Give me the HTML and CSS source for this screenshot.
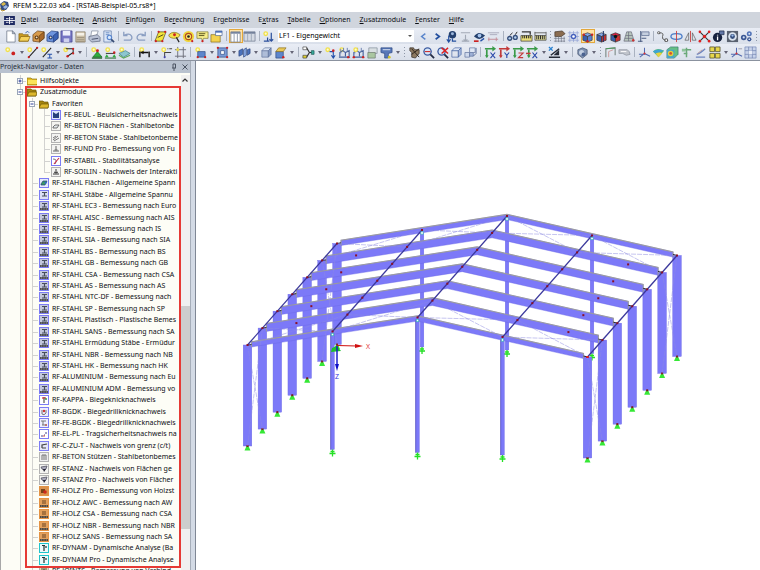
FILE: index.html
```html
<!DOCTYPE html>
<html lang="de">
<head>
  <meta charset="UTF-8">
  <meta name="viewport" content="width=device-width, initial-scale=1.0">
  <title>RFEM 5.22.03 x64 - [RSTAB-Beispiel-05.rs8*]</title>
  <link rel="stylesheet" href="styles.css">
</head>
<body>
  <header class="titlebar">
    <svg class="app-logo" viewBox="0 0 10 12"><path d="M0 4 4 1 8 2 9 6 6 10 1 10Z" fill="#354f82"/><path d="M1 4 4 2 6 4 3 6Z" fill="#d9b94a"/><path d="M3 7 6 5 8 7 5 9Z" fill="#9db8e4"/><path d="M0 8 2 11 5 10" stroke="#b89130" fill="none"/></svg>
    <span>RFEM 5.22.03 x64 - [RSTAB-Beispiel-05.rs8*]</span>
  </header>

  <nav class="menubar">
    <svg class="doc-logo" viewBox="0 0 12 10"><path d="M0 0H12V10H0Z" fill="#1e2a62"/><path d="M0 5H12M6 1V9M2 3H5M7 3H10M2 7H5M7 7H10" stroke="#fff"/></svg>
    <button><u>D</u>atei</button>
    <button>Bearbeite<u>n</u></button>
    <button><u>A</u>nsicht</button>
    <button><u>E</u>infügen</button>
    <button>Be<u>r</u>echnung</button>
    <button>Er<u>g</u>ebnisse</button>
    <button>E<u>x</u>tras</button>
    <button><u>T</u>abelle</button>
    <button><u>O</u>ptionen</button>
    <button><u>Z</u>usatzmodule</button>
    <button><u>F</u>enster</button>
    <button><u>H</u>ilfe</button>
  </nav>

  <div class="toolbar" id="bar-main">
    <div class="tools" data-tools="new open block blockBlue save calc print preview | undo redo | plane lasso target note folderOut | *table tableGrey | newLoad"></div>
    <label class="combo"><select aria-label="Lastfall"><option>LF1 - Eigengewicht</option></select></label>
    <div class="tools" data-tools="prev next eyeLoad valueGrey eye values | glasses ruler rulerB : hand gridDots *viewBox axesBlue axesRed gridCone flag | link rotate mirror cross info cylinder gears :"></div>
  </div>
  <div class="toolbar toolbar-wide">
    <div class="tools" data-tools="node v line lineI v arc v | support hinge slab | dimension v dimText frameDots | rect v opening v solid v cube box v | release v loadNode loadA loadB loadGrey filter v : pick zoomIn zoomOut cube3d cubes | viewX viewY viewZ viewNegX v dark v | shield v : portal beamGrey | moment surface solidRes green slope yellow v momentB gridBlue |"></div>
  </div>

  <main class="workspace">
    <aside class="navigator">
      <div class="nav-header">
        <span>Projekt-Navigator - Daten</span>
        <button aria-label="Anheften"><svg viewBox="0 0 8 8"><path d="M2 5H6M3 5V1H5.500V5M4 5V8" fill="none" stroke="#4c5563"/></svg></button>
        <button aria-label="Schließen"><svg viewBox="0 0 8 8"><path d="M1.500 1.500 6.500 6.500M6.500 1.500 1.500 6.500" stroke="#4c5563"/></svg></button>
      </div>
      <div class="nav-body">
        <ul class="tree" id="tree"></ul>
        <div class="scrollbar">
          <svg viewBox="0 0 8 8"><path d="M1.500 5.500 4 3 6.500 5.500" fill="none" stroke="#333" stroke-width="1.200"/></svg>
          <div class="thumb"></div>
        </div>
        <div class="marker"></div>
      </div>
    </aside>
    <section class="viewport">
      <svg id="scene" viewBox="196 61 564 509" preserveAspectRatio="xMinYMin meet"></svg>
    </section>
  </main>

  <script src="script.js"></script>
</body>
</html>
```

FILE: styles.css
```css
* {
  box-sizing: border-box;
}
body {
  margin: 0;
  height: 100vh;
  display: flex;
  flex-direction: column;
  overflow: hidden;
  background: #fff;
  color: #0c0e14;
  font-family: 'Noto Sans', 'Segoe UI', sans-serif;
  font-size: 7px;
  line-height: 10px;
}
button {
  border: 0;
  padding: 0;
  background: none;
  color: inherit;
  font: inherit;
}
svg {
  display: block;
}
.titlebar {
  display: flex;
  align-items: center;
  gap: 3px;
  height: 12px;
  padding-bottom: 1px;
  color: #000;
}
.app-logo {
  width: 10px;
  height: 12px;
}
.menubar {
  display: flex;
  align-items: center;
  gap: 9px;
  height: 16px;
  padding-left: 4px;
  background: #d0d5dd;
}
.doc-logo {
  width: 11px;
  height: 9px;
  margin-right: -3px;
}
.toolbar {
  display: flex;
  align-items: center;
  height: 16px;
  padding-left: 4px;
  background: linear-gradient(#e9edf5, #d9dfea);
}
.toolbar-wide {
  height: 17px;
  border-bottom: 1px solid #8b929f;
}
.tools {
  display: flex;
  align-items: center;
}
.tool {
  width: 14px;
  height: 14px;
}
.tool svg {
  width: 13px;
  height: 13px;
}
.tool.on {
  background: #ffe3a6;
  box-shadow: inset 0 0 0 1px #e3a83c;
}
.drop {
  width: 8px;
  height: 14px;
  display: grid;
  place-items: center;
}
.drop svg {
  width: 4px;
  height: 3px;
}
.sep {
  width: 1px;
  height: 10px;
  margin: 0 2px;
  background: #aab2c0;
}
.sep.grip {
  background: repeating-linear-gradient(#8f98a8 0 1px, transparent 1px 3px);
}
.toolbar-wide .sep {
  margin: 0 3px 0 2px;
}
.combo {
  position: relative;
  width: 136px;
  margin: 0 3px 0 2px;
}
.combo select {
  appearance: none;
  display: block;
  width: 100%;
  height: 12px;
  padding: 0 1px;
  border: 0;
  border-radius: 0;
  background: #fff;
  color: #000;
  font: inherit;
}
.combo::after {
  content: '';
  position: absolute;
  top: 5px;
  right: 2px;
  border: 2px solid transparent;
  border-top-color: #555;
}
.workspace {
  flex: 1;
  display: flex;
  min-height: 0;
}
.navigator {
  display: flex;
  flex-direction: column;
  width: 191px;
  border-right: 1px solid #a5adb9;
}
.nav-header {
  display: flex;
  align-items: center;
  gap: 3px;
  height: 12px;
  padding-right: 1px;
  background: #b9c2cf;
  color: #262e3a;
}
.nav-header span {
  flex: 1;
}
.nav-header svg {
  width: 8px;
  height: 8px;
}
.nav-body {
  position: relative;
  flex: 1;
  display: flex;
  min-height: 0;
  padding-top: 2px;
  border-left: 1px solid #a8a8a8;
  background: #fdfdf6;
  overflow: hidden;
}
.tree {
  flex: 1;
  display: grid;
  grid-auto-rows: minmax(11px, 1fr);
  min-width: 0;
  height: calc(100% + 7px);
  margin: 0 1px 0 0;
  padding: 0 0 0 13px;
  list-style: none;
  overflow: hidden;
}
.row {
  display: flex;
  align-items: center;
  min-width: 0;
  overflow: hidden;
  white-space: nowrap;
}
.cell {
  flex: none;
  position: relative;
  align-self: stretch;
  display: grid;
  place-items: center;
  width: 12px;
}
.cell.line::before,
.cell.last::before,
.cell.tee::after {
  content: '';
  position: absolute;
  background: #d2d2d0;
}
.cell.line::before {
  left: 6px;
  top: 0;
  width: 1px;
  height: 100%;
}
.cell.last::before {
  left: 6px;
  top: 0;
  width: 1px;
  height: 50%;
}
.cell.tee::after {
  left: 6px;
  top: 50%;
  width: 6px;
  height: 1px;
}
.cell svg {
  position: relative;
  z-index: 1;
  width: 6px;
  height: 6px;
}
.icon {
  flex: none;
  width: 10px;
  height: 10px;
  margin: 0 3px 0 1px;
}
.scrollbar {
  display: flex;
  flex-direction: column;
  width: 9px;
  background: #f0f0f0;
}
.scrollbar svg {
  width: 8px;
  height: 10px;
}
.thumb {
  height: 45%;
  margin-top: 221px;
  background: #cdcdcd;
}
.marker {
  position: absolute;
  top: 13px;
  bottom: 2px;
  left: 24px;
  right: 9px;
  border: 2px solid #e63a35;
}
.viewport {
  flex: 1;
  min-width: 0;
  margin-left: 4px;
  border-left: 1px solid #7f8795;
  box-shadow: -4px 0 #d3dae5;
}
#scene {
  width: 100%;
  font-family: 'Open Sans', sans-serif;
  font-size: 7px;
}
```

FILE: script.js
```js
// ---- toolbar icons, drawn on a 14x14 grid ----
const P = (d, stroke, w = 1) => `<path d="${d}" fill="none" stroke="${stroke}" stroke-width="${w}"/>`;
const F = (d, fill, stroke = 'none') => `<path d="${d}" fill="${fill}" stroke="${stroke}" stroke-width=".7"/>`;
const C = (x, y, r, fill) => `<circle cx="${x}" cy="${y}" r="${r}" fill="${fill}"/>`;
const star = C(4, 4, 2.6, '#f1e04a') + C(4, 4, 1.2, '#fffbd0');
const cube = (a, b, c) => F('M2 5 7 3 12 5 7 7Z', a, '#333') + F('M2 5 7 7V13L2 11Z', b, '#333') + F('M12 5 7 7V13L12 11Z', c, '#333');
const view = (g, axis) => P('M1 3H10M3 4V12', g, 1.8) + F('M9 0 13 3 9 6Z', g) + F('M1 10H5L3 13Z', g) + axis;
const axisX = c => P('M7 7 12 13M12 7 7 13', c, 1.2);
const axisY = c => P('M7 7 9.5 10 12 7M9.5 10V13', c, 1.2);
const axisZ = c => P('M7 7.5H12L7 12.5H12', c, 1.2);
const truss = P('M1 12H13M2 11V7L5 5L8 7V11M8 7L12 5V11', '#46609a', 1.2) + P('M3 3V8M6 2V6M10 2V6', '#6b7fae');
const tripod = P('M7 2V8L2 12M7 8L13 11M1 9H8', '#536bb0', 1.1) + C(7, 8, 1.1, '#d33');
const holed = (a, b, side) => F('M1 5 6 1 13 2V9L8 13 1 12Z', a, side) + F('M8 6 13 2V9L8 13Z', b, side) + C(5, 8, 2.2, side) + C(5, 8, 1, '#f5e3c4');

const art = {
  new: F('M3 1H9L12 4V13H3Z', '#fff', '#5b6678') + F('M9 1V4H12Z', '#c8d2e2', '#5b6678'),
  open: F('M1 4H5L6 5H11V12H1Z', '#c99b22', '#806010') + F('M3 7H13L11 12H1Z', '#f5d25c', '#806010') + P('M8 3Q11 0 12 3', '#3a66b0'),
  block: holed('#d79a4c', '#a9692a', '#5f3a12'),
  blockBlue: holed('#6d94de', '#3b62b4', '#213b77'),
  save: F('M1 1H13V13H1Z', '#7777c4', '#3d3d88') + F('M3 1H11V6H3Z', '#eef0fb') + F('M4 9H10V13H4Z', '#cfd2ee'),
  calc: F('M2 2H12V13H2Z', '#cfc3ab', '#7d7058') + F('M3 3H11V6H3Z', '#f5f1e6') + P('M3 8H11M3 10H11M3 12H11', '#857a68', .7),
  print: F('M4 1H11L9 7H3Z', '#fff', '#7a8496') + F('M1 7 10 5 13 8V12L4 13 1 10Z', '#b9c1d4', '#525d73') + P('M4 10 11 9', '#45506a'),
  preview: F('M2 1H10V13H2Z', '#dbe6f7', '#5873a0') + P('M4 3H8M4 5H8', '#6d8fc5') + C(8, 8, 3, '#5b87cf') + C(8, 8, 1.7, '#d9ebff') + P('M10 10 13 13', '#364a73', 1.8),
  undo: P('M3 11H10Q13 9 11 6Q9 3 3 6M3 2V6H7', '#8a9ec2', 1.4),
  redo: P('M11 11H4Q1 9 3 6Q5 3 11 6M11 2V6H7', '#8a9ec2', 1.4),
  plane: F('M5 2H13L9 12H1Z', '#f4e63c', '#46401a') + C(5, 2, 1.2, '#c22') + C(12, 2, 1.2, '#c22') + C(9, 12, 1.2, '#c22') + C(2, 12, 1.2, '#c22') + P('M4 8 10 5', '#46401a'),
  lasso: F('M1 5Q6 0 13 5Q12 9 6 9Q0 8 1 5Z', '#f6e04a', '#7a6a18') + C(7, 5, 1.6, '#c22') + P('M9 8 12 13', '#222', 1.3),
  target: C(7, 7, 6, '#f0d63a') + C(7, 7, 4, '#b34a20') + C(7, 7, 2.8, '#f6e46a') + C(7, 7, 1.4, '#222') + C(11, 12, 1.2, '#c22'),
  note: F('M1 2H13V9H8L7 12 6 9H1Z', '#f7ee8a', '#75702c') + P('M3 4H10M3 6H9', '#56511c') + C(7, 12, 1.2, '#c22'),
  folderOut: F('M1 5H11V13H1Z', '#f3d24e', '#80691c') + F('M6 1H13V6H6Z', '#fff', '#48618f') + P('M6 2H13', '#3a62b0', 1.6),
  table: F('M2 2H12V13H2Z', '#fff', '#5b6678') + F('M2 2H12V4H2Z', '#75849f') + P('M5.500 4V13M9 4V13', '#8d98ab'),
  tableGrey: F('M1 2H13V12H1Z', '#d5dae3', '#667186') + F('M1 2H13V4H1Z', '#73809a') + P('M5 4V12M9 4V12', '#98a3b5', .9),
  newLoad: star + P('M6 8V12M10 3V12M8 10L10 12L12 10M2 12H8', '#2b4f9c', 1.3),
  prev: P('M9 4 5 7 9 10', '#5b86cc', 1.6),
  next: P('M5 4 9 7 5 10', '#24509f', 1.8),
  eyeLoad: C(8, 5, 4, '#24406e') + C(8, 4, 1.6, '#9db8dd') + P('M4 6V12M2 10 4 13 6 10M8 9V12H12', '#24509f', 1.3),
  valueGrey: P('M2 3H12M7 5V12M5 10 7 12 9 10M3 12H11', '#a2a9b6', 1.2),
  eye: F('M1 7Q6 0 13 6Q9 11 4 9Z', '#24406e') + C(7, 6, 2, '#a8c5ee') + P('M1 12H6', '#c22', 1.8) + P('M8 12 12 9', '#2450aa', 1.4),
  values: P('M1 3H13M3 5H11', '#aab', 1) + P('M1 10H12M10 8V12M2 8V12', '#c58b96'),
  glasses: C(4, 9, 2.8, '#37507e') + C(4, 9, 1.3, '#b8d2ef') + C(10, 8, 2.8, '#37507e') + C(10, 8, 1.3, '#b8d2ef') + P('M4 6 7 3M10 5 12 2', '#222'),
  ruler: P('M2 2H11V5', '#333', 1.4) + F('M1 6H13V12H1Z', '#e9dd7a', '#333') + P('M3 6V9M5 6V9M7 6V9M9 6V9M11 6V9', '#222'),
  rulerB: P('M1 3H13M1 2V6M13 2V6', '#666') + F('M1 6H13V11H1Z', '#e3df9b', '#333') + P('M3 6V10M5 6V10M7 6V10M9 6V10M11 6V10', '#222'),
  hand: F('M2 2 10 1 13 4 9 7H2Z', '#8a6c50', '#3c3024') + P('M1 9H13M1 12H13M3 7V13M6 7V13M9 7V13M12 7V13', '#6c7482', .7),
  gridDots: P('M1 3H13M1 7H13M1 11H13M3 1V13M7 1V13M11 1V13', '#8b9cd2', .7) + C(7, 7, 3, '#4661bd') + C(7, 7, 1.4, '#fff'),
  viewBox: cube('#7fa6ea', '#395fae', '#5a83cf') + C(3, 5, 1.3, '#c22') + C(12, 5, 1.3, '#c22') + C(7, 12, 1.3, '#c22'),
  axesBlue: cube('#86a9e8', '#3a5ea8', '#c33') + P('M9 1V13', '#26396d', 1.2),
  axesRed: cube('#d24', '#3a5ea8', '#c33') + C(7, 7, 1.8, '#111'),
  gridCone: F('M4 2H9L12 12H1Z', '#b8c6bd', '#667') + P('M3 6H10M2 9H11M6 2V12', '#667', .7) + C(11, 11, 1.3, '#c33'),
  flag: F('M5 2H13V6H5Z', '#c5cfdf', '#4b5d83') + P('M4 1V13M5 9H10M1 12H6', '#4b5d83', 1.1),
  link: C(3, 3, 1.7, '#555') + C(3, 3, .8, '#fff') + C(11, 11, 2, '#555') + C(11, 11, 1, '#fff') + P('M4 3Q9 3 7 7Q6 10 10 11', '#555'),
  rotate: P('M1 7Q1 4 7 4Q13 4 13 7Q13 10 7 10Q1 10 1 7', '#4a7cc7', 1.4) + P('M7 1V13', '#c44'),
  mirror: F('M5 3V11H1Z', '#dfe3ea', '#555') + F('M9 3V11H13Z', '#dfe3ea', '#555') + P('M7 1V13', '#c44'),
  cross: P('M2 2 12 12M12 2 2 12', '#333', 1.2) + [2, 12].map(x => C(x, 2, 1.4, '#d22') + C(x, 12, 1.4, '#d22')).join('') + C(7, 7, 1.8, '#d22'),
  info: C(6, 8, 5, '#16223f') + P('M6 7V11M6 5V6', '#fff', 1.4) + F('M8 1H13V5H8Z', '#6277a6', '#16223f'),
  cylinder: F('M1 1H13V13H1Z', '#5a6270') + C(7, 7, 4.6, '#dbe4ef') + C(7, 7, 2.6, '#37507e') + C(7, 6, 1.2, '#9fc0ef'),
  gears: C(4, 8, 3, '#3a5693') + C(4, 8, 1.2, '#cfe0f5') + C(10, 4, 2.7, '#5273b7') + C(10, 4, 1, '#dce8f8') + C(10, 10, 2.3, '#3a5693') + C(10, 10, .9, '#dce8f8'),
  node: star + C(10, 8, 2, '#c22'),
  line: star + P('M3 12 12 2', '#222', 1.1) + C(3, 12, 1.2, '#c22') + C(12, 2, 1.2, '#c22'),
  lineI: star + P('M3 12 12 2', '#222', 1.1) + P('M8 9H13M10.500 9V13M8 13H13', '#2450aa', 1.1),
  arc: star + P('M4 3H12V7L6 11', '#222', 1.1) + C(12, 3, 1.2, '#c22') + C(12, 8, 1.2, '#c22') + C(6, 11, 1.3, '#c22'),
  support: star + F('M8 6 13 12H3Z', '#2fae3e', '#135c1c') + C(8, 5, 1.6, '#c22') + P('M2 13H13', '#135c1c', 1.3),
  hinge: star + P('M2 8H12', '#333') + F('M3 9 5 12H1Z', '#2fae3e') + F('M11 9 13 12H9Z', '#2fae3e') + C(11, 7, 1.3, '#c22') + P('M1 13H13', '#135c1c'),
  slab: star + F('M1 8 8 5 13 8 6 12Z', '#8cc7cf', '#3c7a82') + P('M1 10 6 13 13 10', '#5ea95c', 1.2),
  dimension: star + P('M2 6V12M12 6V12M3 7H11', '#111', 1.5) + F('M3 7 6 5V9Z', '#111'),
  dimText: star + P('M5 12V7H12M8 3H9M10 3H13', '#444', 1.1) + C(5, 12, 1.1, '#44a'),
  frameDots: P('M4 1V13M10 1V13M1 4H13M1 11H13', '#6d6f7a', 1) + C(4, 4, 1.6, '#e7d845'),
  rect: star + F('M4 6H12V12H4Z', '#5e86cc', '#2a457f') + C(12, 12, 1.2, '#c22') + C(4, 12, 1.2, '#c22'),
  opening: F('M2 2H12V12H2Z', '#7b9bd6', '#2a457f') + F('M5 5H9V9H5Z', '#fff', '#2a457f') + C(2, 2, 1.2, '#c22') + C(12, 12, 1.2, '#c22') + C(12, 2, 1.2, '#c22') + C(2, 12, 1.2, '#c22'),
  solid: F('M1 5 5 3V9L1 11Z', '#4a72bc', '#26417c') + F('M6 4 9 2V10L6 12Z', '#86a8e2', '#26417c') + F('M10 4 13 3V8L10 10Z', '#4a72bc', '#26417c'),
  cube: F('M2 5H9V12H2Z', '#aebdd8', '#5b6f99') + F('M2 5 5 2H12L9 5Z', '#dde5f3', '#5b6f99') + F('M9 5 12 2V9L9 12Z', '#8499c2', '#5b6f99'),
  box: F('M2 6H10V13H2Z', '#5e86cc', '#2a457f') + F('M2 6 5 2H13L10 6Z', '#e9c958', '#866a18') + C(10, 12, 1.3, '#c22'),
  release: P('M1 2H5L8 7H11M1 12H5L8 7', '#333', 1.2) + F('M1 1H5V4H1Z', '#fff', '#444') + F('M10 5H13V9H10Z', '#3a9', '#255') + F('M1 10H5V13H1Z', '#e0d030', '#444'),
  loadNode: star + P('M6 6H10V12M8 10 10 13 12 10', '#2450aa', 1.2) + C(10, 5, 1.4, '#c22'),
  loadA: star + truss + C(11, 12, 1.3, '#c22'),
  loadB: truss + star + C(2, 12, 1.3, '#c22') + C(12, 12, 1.3, '#c22'),
  loadGrey: F('M3 2H12V8H3Z', '#d9dfe2', '#7c8796') + F('M2 7H10V13H2Z', '#a9c6a0', '#69766a'),
  filter: F('M1 2H13V7L9 8V13H5V8L1 7Z', '#5878b8', '#2a457f') + P('M3 4H11', '#dfe7f5') + C(10, 12, 1.5, '#d4c52f'),
  pick: F('M2 2H6L7 4H12V8L8 13 4 12V7L2 5Z', '#8d7960', '#29221a') + P('M4 3 12 12M12 3 4 9', '#29221a'),
  zoomIn: C(6, 6, 4.6, '#3c5ba0') + C(6, 6, 3.2, '#d8e6f8') + P('M3 6H9', '#c33', 1.2) + P('M9 9 13 13', '#222b44', 2),
  zoomOut: C(6, 6, 4.6, '#3c5ba0') + C(6, 6, 3.2, '#d8e6f8') + P('M9 9 13 13', '#222b44', 2) + P('M6 2 13 8M13 2 6 8', '#d22', 1.5),
  cube3d: F('M2 5H9V12H2Z', 'none', '#3d5c9c') + F('M2 5 5 2H12L9 5Z', '#dfe7f5', '#3d5c9c') + F('M9 5 12 2V9L9 12Z', '#a9bbdf', '#3d5c9c'),
  cubes: F('M1 7H6V12H1Z', '#cfd9ec', '#5a6e9a') + F('M6 7H10V11H6Z', '#9fb2d8', '#5a6e9a') + F('M6 2H12V7H6Z', '#dfe7f5', '#5a6e9a') + P('M10 11 13 8V2', '#5a6e9a'),
  viewX: view('#3a9b48', axisX('#2746a8')),
  viewY: view('#c23a3a', axisY('#2746a8')),
  viewZ: view('#3a9b48', axisZ('#c23a3a')),
  viewNegX: view('#3a9b48', axisX('#2746a8')) + P('M0 8H5', '#c23a3a', 1.6),
  dark: P('M1 12H13M3 10 12 3', '#252b36', 1.6) + P('M1 1 5 5M5 1 1 5', '#2a82d0', 1.4) + F('M6 10 12 4V10Z', '#252b36'),
  shield: F('M2 4 7 2 12 4V9L7 13 2 9Z', '#7d90b0', '#384864') + C(6, 7, 2.7, '#c4d0e2') + C(8, 9, 2, '#4a6290'),
  portal: P('M2 12V3L12 2V10', '#7c8a86', 1.2) + P('M5 12V6L10 4', '#c99', 1) + P('M2 3 12 2', '#4a9b55', 1),
  beamGrey: F('M1 4H10L12 6 13 9 9 10 5 8H1Z', '#c0c4cb', '#868d99') + P('M3 6H9', '#fff'),
  moment: tripod,
  surface: F('M1 6Q5 1 13 5L7 12Z', '#5fbf6a') + F('M1 6Q5 2 13 5Q8 6 5 9Z', '#3fa4d4') + F('M4 8Q8 6 11 8L7 12Z', '#e8d143'),
  solidRes: F('M1 4 5 1H13V9L9 13H1Z', '#66bf83', '#3b7a70') + F('M1 4H9V13H1Z', '#4aa5c8') + C(5, 8, 3, '#e6cf3c') + C(5, 8, 1.5, '#d5532e'),
  green: P('M3 4H12M7 2V12M4 8H8', '#6aa879', 1.6) + F('M2 3H6V6H2Z', '#8fc49b'),
  slope: P('M2 12H12M3 9Q7 8 12 3', '#6d84be', 1.3) + P('M4 8 9 4', '#b99', 1),
  yellow: [2, 8].map(x => F(`M${x} 1H${x + 5}V6H${x}Z`, '#e6d64b', '#3c3a1c') + F(`M${x} 8H${x + 5}V13H${x}Z`, '#e6d64b', '#3c3a1c')).join(''),
  momentB: tripod + P('M9 3H13', '#99a'),
  gridBlue: F('M1 1H13V13H1Z', '#c8d3ea', '#7385b4') + P('M1 5H13M1 9H13M5 1V13M9 1V13', '#7385b4', .8) + F('M5 5H9V9H5Z', '#e8edf8')
};

document.querySelectorAll('.tools').forEach(bar => {
  bar.innerHTML = bar.dataset.tools.split(' ').map(name => {
    if (name === '|') return '<span class="sep"></span>';
    if (name === ':') return '<span class="sep grip"></span>';
    if (name === 'v') return '<button class="drop" aria-label="Auswahl"><svg viewBox="0 0 4 3"><path d="M0 0H4L2 3Z" fill="#667"/></svg></button>';
    const on = name[0] === '*';
    const key = on ? name.slice(1) : name;
    return `<button class="tool${on ? ' on' : ''}" aria-label="${key}"><svg viewBox="0 0 14 14">${art[key]}</svg></button>`;
  }).join('');
});

// ---- navigator tree ----
const frame = (border, fill, inner) => `<rect x=".5" y=".5" width="9" height="9" fill="${fill}" stroke="${border}"/>${inner}`;
const ibeam = P('M3 2.500H8M3 6H8M5.500 2.500V6', '#474e5c', 1.2);
const code = P('M1 8H9', '#333', 1.6) + P('M2.500 7V9M5 7V9M7.500 7V9', '#888', .6);
const BLUE = '#7c7cf4', GREY = '#b3b3b3', ORANGE = '#e39345', CYAN = '#20c4cc';
const icons = {
  folder: F('M0 2H4L5 3H10V9H0Z', '#e6bd22', '#8d7312') + F('M1 4H10V8H1Z', '#fae35a'),
  open: F('M0 2H4L5 3H9V9H0Z', '#a5850d', '#6e5908') + F('M0 9 2 5H10L9 9Z', '#dcb72b', '#6e5908'),
  beul: frame(BLUE, '#dfe6fb', F('M2 2 5 4 8 2V8H2Z', '#27407c')),
  betonF: frame(GREY, '#f4f4f1', F('M2 6 4 4H8L6 7H2Z', '#e3e8ec', '#444')),
  betonS: frame(GREY, '#f4f4f1', P('M2 7 7 3M3 8 8 5M2 5 5 3', '#777', 1)),
  fund: frame(GREY, '#f4f4f1', P('M5 2V6M2 7H8M3.500 6H6.500', '#666', 1)),
  stabil: frame(BLUE, '#fff', P('M2 3Q7 3 4 8', '#555', .8) + P('M3 8 8 2', '#c24', 1.1)),
  soilin: frame(GREY, '#f4f4f1', P('M5 2V6M2 7H8M3 5 5 6 7 5', '#333', 1)),
  flaechen: frame(BLUE, '#e6ecfb', F('M2 6 4 3H8L6 7H2Z', '#3c9c65', '#27407c') + F('M5 4H8L7 6Z', '#2d65cc')),
  stahl: frame(BLUE, '#dcdff5', ibeam),
  norm: frame(BLUE, '#c3c7dc', ibeam + code),
  kappa: frame(BLUE, '#fff', P('M5 2V8', '#333', 1) + P('M3 3H7', '#c33', 1.2) + C(7, 4, 1, '#3a9b48')),
  bgdk: frame(BLUE, '#eef', P('M3 3V7Q5 9 7 6V3', '#777', 1) + C(5, 4, 1.2, '#c33')),
  febgdk: frame(BLUE, '#eef', P('M2 3H7M4 3V7M3 7H8', '#777', 1) + C(7, 7, 1.1, '#b66')),
  elpl: frame(BLUE, '#fff', P('M2 7H4M5 6H6M7 3V5', '#448', 1) + C(5, 7, .8, '#c33')),
  czut: frame(BLUE, '#e3e6f6', P('M3 7V4L8 3M3 7H7', '#444', 1.2)),
  stuetzen: frame(GREY, '#eee', P('M3 8V3H7V8M5 3V8', '#777', 1)),
  stanz: frame(GREY, '#f4f4f1', F('M2 3 8 2 7 5 5 6 3 5Z', '#aab', '#445') + F('M4 5 7 5 5 8Z', '#223')),
  holzPro: frame(ORANGE, '#d9924e', F('M2 3H6V7H2Z', '#75451c') + C(6, 6, 1.8, '#cc2a1c')),
  holz: frame(ORANGE, '#e2a05c', P('M3 3H7M3 5H7', '#6b4522', 1.2) + code),
  dynam: frame(CYAN, '#eefafb', P('M3 2.500H6M5 2V8M7 3V5', '#233', 1.2)),
  joints: frame(GREY, '#e8d8b0', P('M2 3H8M5 3V8', '#554', 1.2))
};

// [level, icon, text, expander]
const rows = [
  [1, 'folder', 'Hilfsobjekte', '+'],
  [1, 'open', 'Zusatzmodule', '-'],
  [2, 'open', 'Favoriten', '-'],
  [3, 'beul', 'FE-BEUL - Beulsicherheitsnachweis'],
  [3, 'betonF', 'RF-BETON Flächen - Stahlbetonbe'],
  [3, 'betonS', 'RF-BETON Stäbe - Stahlbetonbeme'],
  [3, 'fund', 'RF-FUND Pro - Bemessung von Fu'],
  [3, 'stabil', 'RF-STABIL - Stabilitätsanalyse'],
  [3, 'soilin', 'RF-SOILIN - Nachweis der Interakti', 'last'],
  [2, 'flaechen', 'RF-STAHL Flächen - Allgemeine Spann'],
  [2, 'stahl', 'RF-STAHL Stäbe - Allgemeine Spannu'],
  [2, 'norm', 'RF-STAHL EC3 - Bemessung nach Euro'],
  [2, 'norm', 'RF-STAHL AISC - Bemessung nach AIS'],
  [2, 'norm', 'RF-STAHL IS - Bemessung nach IS'],
  [2, 'norm', 'RF-STAHL SIA - Bemessung nach SIA'],
  [2, 'norm', 'RF-STAHL BS - Bemessung nach BS'],
  [2, 'norm', 'RF-STAHL GB - Bemessung nach GB'],
  [2, 'norm', 'RF-STAHL CSA - Bemessung nach CSA'],
  [2, 'norm', 'RF-STAHL AS - Bemessung nach AS'],
  [2, 'norm', 'RF-STAHL NTC-DF - Bemessung nach'],
  [2, 'norm', 'RF-STAHL SP - Bemessung nach SP'],
  [2, 'norm', 'RF-STAHL Plastisch - Plastische Bemes'],
  [2, 'norm', 'RF-STAHL SANS - Bemessung nach SA'],
  [2, 'norm', 'RF-STAHL Ermüdung Stäbe - Ermüdur'],
  [2, 'norm', 'RF-STAHL NBR - Bemessung nach NB'],
  [2, 'norm', 'RF-STAHL HK - Bemessung nach HK'],
  [2, 'norm', 'RF-ALUMINIUM - Bemessung nach Eu'],
  [2, 'norm', 'RF-ALUMINIUM ADM - Bemessung vo'],
  [2, 'kappa', 'RF-KAPPA - Biegeknicknachweis'],
  [2, 'bgdk', 'RF-BGDK - Biegedrillknicknachweis'],
  [2, 'febgdk', 'RF-FE-BGDK - Biegedrillknicknachweis'],
  [2, 'elpl', 'RF-EL-PL - Tragsicherheitsnachweis na'],
  [2, 'czut', 'RF-C-ZU-T - Nachweis von grenz (c/t)'],
  [2, 'stuetzen', 'RF-BETON Stützen - Stahlbetonbemes'],
  [2, 'stanz', 'RF-STANZ - Nachweis von Flächen ge'],
  [2, 'stanz', 'RF-STANZ Pro - Nachweis von Flächer'],
  [2, 'holzPro', 'RF-HOLZ Pro - Bemessung von Holzst'],
  [2, 'holz', 'RF-HOLZ AWC - Bemessung nach AW'],
  [2, 'holz', 'RF-HOLZ CSA - Bemessung nach CSA'],
  [2, 'holz', 'RF-HOLZ NBR - Bemessung nach NBR'],
  [2, 'holz', 'RF-HOLZ SANS - Bemessung nach SA'],
  [2, 'dynam', 'RF-DYNAM - Dynamische Analyse (Ba'],
  [2, 'dynam', 'RF-DYNAM Pro - Dynamische Analyse'],
  [2, 'joints', 'RF-JOINTS - Bemessung von Verbind']
];

document.getElementById('tree').innerHTML = rows.map(([level, icon, text, mark]) => {
  let cells = '<span class="cell line"></span>'.repeat(level - 1);
  const box = mark === '+' || mark === '-'
    ? `<svg viewBox="0 0 6 6"><rect x=".5" y=".5" width="5" height="5" fill="#fff" stroke="#9aa6b8"/><path d="M1.500 3H4.500${mark === '+' ? 'M3 1.500V4.500' : ''}" stroke="#2c3f97"/></svg>`
    : '';
  cells += `<span class="cell tee ${mark === 'last' ? 'last' : 'line'}">${box}</span>`;
  return `<li class="row">${cells}<svg class="icon" viewBox="0 0 10 10">${icons[icon]}</svg>${text}</li>`;
}).join('');

// ---- hall model: 7 frames, front (0) to back (6) ----
const N = 6, DX = 14.92, DY = -16.92;
const eaveL = [247.5, 345], midL = [332.5, 331.5], ridge = [417.5, 317.5], midR = [502.5, 337], eaveR = [587.5, 357];
const at = (p, i, ox = 0, oy = 0) => [p[0] + DX * i + ox, p[1] + DY * i + oy];
const FILL = '#7c79f8', DARK = '#3b389c';
const poly = pts => `<polygon points="${pts.map(p => p.join()).join(' ')}" fill="${FILL}" stroke="#6b68e6" stroke-width=".4"/>`;
const line = (a, b, color, w, extra = '') => `<line x1="${a[0]}" y1="${a[1]}" x2="${b[0]}" y2="${b[1]}" stroke="${color}" stroke-width="${w}" ${extra}/>`;
const post = (p, h, w) => `<rect x="${p[0] - w / 2}" y="${p[1]}" width="${w}" height="${h}" fill="${FILL}" stroke="#6b68e6" stroke-width=".4"/>`;
const dot = (p, color = '#8b1026') => `<rect x="${p[0] - 1}" y="${p[1] - 1}" width="2" height="2" fill="${color}"/>`;
const foot = p => `<path d="M${p[0] - 3} ${p[1] + 4.5}H${p[0] + 3}L${p[0] + 1} ${p[1]}H${p[0] - 1}Z" fill="#35e835"/>` + dot(p, '#7a1a1a');
const pin = p => `<path d="M${p[0]} ${p[1]}V${p[1] + 7}M${p[0] - 3} ${p[1] + 4}H${p[0] + 3}M${p[0] - 2} ${p[1] + 2}H${p[0] + 2}" stroke="#25e025" stroke-width="1.300"/>`;

let out = '';

// rear gable posts
[[midL, 117], [ridge, 134], [midR, 118]].forEach(([p, h]) => {
  const top = at(p, N);
  out += post(top, h, 3.6) + pin([top[0], top[1] + h]);
});

for (let i = N; i >= 0; i--) {
  const end = i === 0 || i === N;
  const t = end ? 2.6 : 3.9;
  const l = at(eaveL, i), r = at(eaveR, i), c = at(ridge, i);
  const a = [l[0] + 4, l[1] - .6], b = [r[0] - 4, r[1] - 1];
  out += post(l, 101, 8.6) + post(r, 101, 8.6);
  out += foot([l[0], l[1] + 101]) + foot([r[0], r[1] + 101]);
  out += poly([[a[0], a[1] - t], [c[0], c[1] - t + 1], [b[0], b[1] - t], [b[0], b[1] + t], [c[0], c[1] + t + 1], [a[0], a[1] + t]]);
  out += `<polyline points="${a[0]},${a[1] + t} ${a[0]},${a[1] - t} ${c[0]},${c[1] - t + 1} ${b[0]},${b[1] - t} ${b[0]},${b[1] + t}" fill="none" stroke="#9c9ca0" stroke-width="1.100"/>`;
  out += line(l, a, '#222', 1) + line(b, r, '#222', 1);
}

// roof and wall bracing in the two end bays
const thin = (a, b) => line(a, b, '#8d8be0', .5, 'stroke-dasharray="5 1"');
[0, N - 1].forEach(i => {
  [[eaveL, midL], [midL, ridge], [ridge, midR], [midR, eaveR]].forEach(([p, q]) => {
    out += thin(at(p, i), at(q, i + 1)) + thin(at(p, i + 1), at(q, i));
  });
  [eaveL, eaveR].forEach(p => {
    out += thin(at(p, i), at(p, i + 1, 0, 101)) + thin(at(p, i + 1), at(p, i, 0, 101));
  });
});

// front gable posts
[[midL, 118], [ridge, 135], [midR, 118]].forEach(([p, h]) => {
  out += post([p[0], p[1] + 2], h - 2, 3.6) + line([p[0] - 1.8, p[1] + 3], [p[0] - 1.8, p[1] + h], '#4a47b0', .6) + pin([p[0], p[1] + h]);
});

// purlins and their nodes
[eaveL, midL, ridge, midR, eaveR].forEach(p => {
  out += line(at(p, 0), at(p, N), DARK, 1.3);
  for (let i = 0; i <= N; i++) out += dot(at(p, i));
});
for (let i = 1; i < N; i++) out += dot(at(eaveL, i, 34, -5)) + dot(at(eaveR, i, -34, -8));
[midL, ridge, midR].forEach(p => [0, N].forEach(i => {
  const q = at(p, i, 0, 3);
  out += `<rect x="${q[0] - 1.2}" y="${q[1] - 1.2}" width="2.400" height="2.400" fill="#fff" stroke="#3bb5b5" stroke-width=".7"/>`;
}));
out += dot(eaveR, '#f01818');

// global axes
out += '<path d="M331 352 332 348 337 346 341 351Z" fill="#1fbf2f"/>';
out += line([337, 345.5], [357, 346], '#d01010', 1.2) + '<path d="M355 344 363 346 355 348Z" fill="#d01010"/>';
out += line([337, 346], [337, 366], '#1010c8', 1.4) + '<path d="M335 364H339L337 371Z" fill="#1010c8"/>';
out += '<text x="366" y="349" fill="#e03030">X</text><text x="335" y="379" fill="#3434e0">Z</text>';

document.getElementById('scene').innerHTML = out;
```
